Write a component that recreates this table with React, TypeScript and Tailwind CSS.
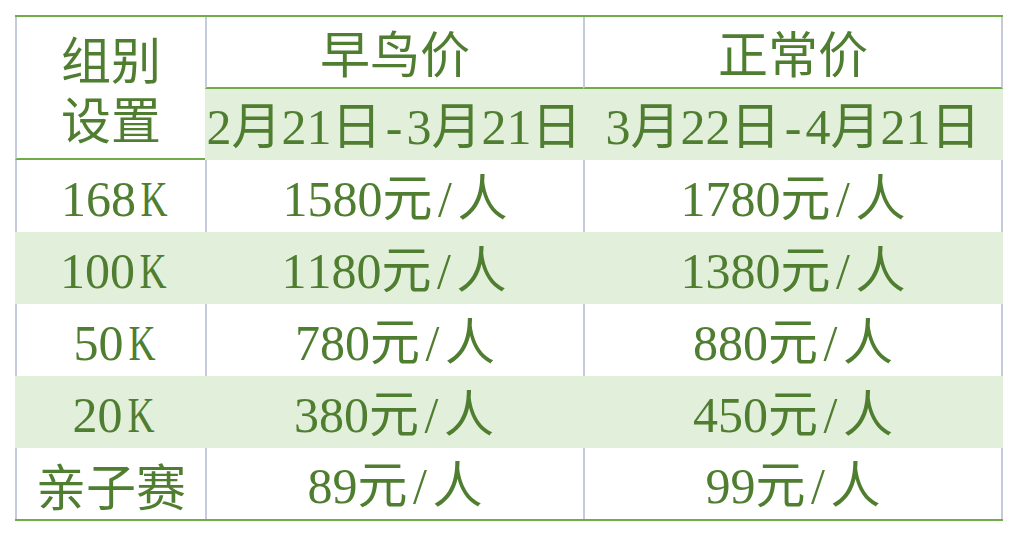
import React from "react";

const GRAY = "border-[#c5cbdd]";

function T({ s }: { s: string }) {
  return (
    <span className="whitespace-nowrap">
      {Array.from(s).map((c, i) =>
        /[\x00-\x7f]/.test(c) ? (
          <span
            key={i}
            className="inline-block w-[0.5em] text-center font-['Liberation_Serif',serif]"
          >
            {c === "K" ? <span className="inline-block scale-x-[0.75]">K</span> : c}
          </span>
        ) : (
          <span key={i}>{c}</span>
        )
      )}
    </span>
  );
}

const rows = [
  ["168K", "1580元/人", "1780元/人"],
  ["100K", "1180元/人", "1380元/人"],
  ["50K", "780元/人", "880元/人"],
  ["20K", "380元/人", "450元/人"],
  ["亲子赛", "89元/人", "99元/人"],
];

export default function App() {
  return (
    <div className="bg-white w-[1018px] h-[536px] pt-[15px] pl-[15px] text-[#4f7e31] text-[50px] leading-none font-['Noto_Sans_CJK_SC',sans-serif]">
      <div className="w-[988px] border-t-2 border-[#70ad47]">
        <div className="grid grid-cols-[190px_378px_420px] grid-rows-[72px_71px]">
          <div className={`row-span-2 border-l-2 ${GRAY} border-b-2 border-b-[#70ad47] flex flex-col items-center justify-center pb-[2px]`}>
            <div className="h-[60px] flex items-center">组别</div>
            <div className="h-[60px] flex items-center">设置</div>
          </div>
          <div className={`border-l-2 ${GRAY} border-b-2 border-b-[#70ad47] flex items-center justify-center pb-[2px]`}>
            <T s="早鸟价" />
          </div>
          <div className={`border-l-2 border-r-2 ${GRAY} border-b-2 border-b-[#70ad47] flex items-center justify-center pb-[2px]`}>
            <T s="正常价" />
          </div>
          <div className="bg-[#e2efda] flex items-center justify-center overflow-visible">
            <T s="2月21日-3月21日" />
          </div>
          <div className="bg-[#e2efda] flex items-center justify-center">
            <T s="3月22日-4月21日" />
          </div>
        </div>
        {rows.map((r, i) => {
          const green = i % 2 === 1;
          const last = i === rows.length - 1;
          const cell = green ? "" : `border-l-2 ${GRAY}`;
          return (
            <div
              key={i}
              className={`grid grid-cols-[190px_378px_420px] ${last ? "h-[73px] border-b-2 border-[#70ad47]" : "h-[72px]"} ${green ? "bg-[#e2efda]" : ""}`}
            >
              <div className={`${cell} flex items-center justify-center`}>
                <T s={r[0]} />
              </div>
              <div className={`${cell} flex items-center justify-center`}>
                <T s={r[1]} />
              </div>
              <div className={`${cell} ${green ? "" : `border-r-2 ${GRAY}`} flex items-center justify-center`}>
                <T s={r[2]} />
              </div>
            </div>
          );
        })}
      </div>
    </div>
  );
}
